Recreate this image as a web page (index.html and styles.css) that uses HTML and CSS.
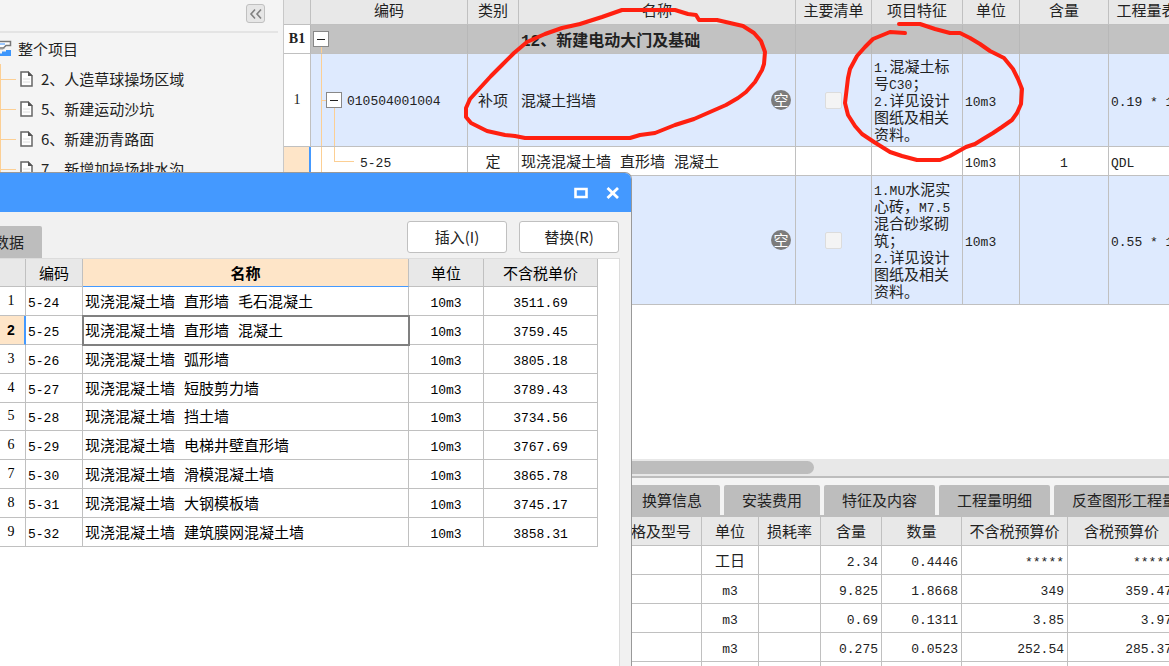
FILE: index.html
```html
<!DOCTYPE html>
<html lang="zh-CN">
<head>
<meta charset="utf-8">
<title>工程计价</title>
<link rel="stylesheet" href="styles.css">
</head>
<body>
<div class="app">
  <aside class="sidebar">
    <div class="sidebar-head">
      <button class="collapse" type="button" aria-label="收起">
        <svg width="14" height="12" viewBox="0 0 14 12" fill="none" stroke="#808080" stroke-width="1.6"><path d="M6 1.5 2 6l4 4.500M12 1.500 8 6l4 4.500"/></svg>
      </button>
    </div>
    <div class="tree-root">
      <svg width="12" height="18" viewBox="0 0 12 18"><path d="M0 1.500h10.500v4H6L3.500 8H0" fill="#fff" stroke="#777" stroke-width="1.500"/><path d="M0 3h5v2H0z" fill="#9cc8ff"/><path d="M0 9h3l2-1.500" fill="none" stroke="#999"/><path d="M2 11.500h4V10h5v6H0v-2.500h2z" fill="#3d96fb"/></svg>
      <span>整个项目</span>
    </div>
    <ul class="tree">
      <li><svg class="doc" width="13" height="16" viewBox="0 0 13 16"><path d="M1 1h7l4 4v10H1z" fill="#fff" stroke="#666" stroke-width="1.500"/><path d="M8 0v5h5z" fill="#555"/><path d="M3 8h7M3 11h7" stroke="#ddd"/></svg>2、人造草球操场区域</li>
      <li><svg class="doc" width="13" height="16" viewBox="0 0 13 16"><path d="M1 1h7l4 4v10H1z" fill="#fff" stroke="#666" stroke-width="1.500"/><path d="M8 0v5h5z" fill="#555"/><path d="M3 8h7M3 11h7" stroke="#ddd"/></svg>5、新建运动沙坑</li>
      <li><svg class="doc" width="13" height="16" viewBox="0 0 13 16"><path d="M1 1h7l4 4v10H1z" fill="#fff" stroke="#666" stroke-width="1.500"/><path d="M8 0v5h5z" fill="#555"/><path d="M3 8h7M3 11h7" stroke="#ddd"/></svg>6、新建沥青路面</li>
      <li><svg class="doc" width="13" height="16" viewBox="0 0 13 16"><path d="M1 1h7l4 4v10H1z" fill="#fff" stroke="#666" stroke-width="1.500"/><path d="M8 0v5h5z" fill="#555"/><path d="M3 8h7M3 11h7" stroke="#ddd"/></svg>7、新增加操场排水沟</li>
    </ul>
  </aside>

  <main class="work">
    <section class="bill">
      <table class="grid bill-grid">
        <colgroup><col class="w-no"><col class="w-code"><col class="w-type"><col class="w-name"><col class="w-main"><col class="w-feat"><col class="w-unit"><col class="w-qty"><col class="w-expr"></colgroup>
        <thead>
          <tr><th></th><th>编码</th><th>类别</th><th>名称</th><th>主要清单</th><th>项目特征</th><th>单位</th><th>含量</th><th>工程量表达式</th></tr>
        </thead>
        <tbody>
          <tr class="group">
            <td class="rowno">B1</td>
            <td class="code guide-top"><button class="toggle" type="button" aria-label="折叠"></button></td>
            <td></td><td class="left title">12、新建电动大门及基础</td><td></td><td></td><td></td><td></td><td></td>
          </tr>
          <tr class="item short">
            <td class="rowno">1</td>
            <td class="code guide-item"><div class="code-line"><button class="toggle" type="button" aria-label="折叠"></button><span class="n">010504001004</span></div></td>
            <td>补项</td>
            <td class="left flush"><div class="name-line"><span class="label">混凝土挡墙</span><span class="badge">空</span></div></td>
            <td class="flush"><input class="tick" type="checkbox" aria-label="主要清单"></td>
            <td class="left feature"><span class="n">1.</span>混凝土标<br>号<span class="n">C30</span>；<br><span class="n">2.</span>详见设计<br>图纸及相关<br>资料。</td>
            <td class="left n">10m3</td><td></td><td class="left n">0.19 * 1</td>
          </tr>
          <tr class="sub">
            <td class="rowno current"></td>
            <td class="code guide-sub n">5-25</td>
            <td>定</td>
            <td class="left">现浇混凝土墙 直形墙 混凝土</td>
            <td></td><td></td>
            <td class="left n">10m3</td><td class="n">1</td><td class="left n">QDL</td>
          </tr>
          <tr class="item tall">
            <td class="rowno">2</td>
            <td class="code"></td><td></td>
            <td class="left flush"><div class="name-line"><span class="label"></span><span class="badge">空</span></div></td>
            <td class="flush"><input class="tick" type="checkbox" aria-label="主要清单"></td>
            <td class="left feature"><span class="n">1.MU</span>水泥实<br>心砖，<span class="n">M7.5</span><br>混合砂浆砌<br>筑；<br><span class="n">2.</span>详见设计<br>图纸及相关<br>资料。</td>
            <td class="left n">10m3</td><td></td><td class="left n">0.55 * 1</td>
          </tr>
        </tbody>
      </table>
      <div class="hscroll"><div class="thumb"></div></div>
    </section>

    <section class="detail">
      <nav class="tabs">
        <button type="button">换算信息</button><button type="button">安装费用</button><button type="button">特征及内容</button><button type="button">工程量明细</button><button type="button">反查图形工程量</button>
      </nav>
      <table class="grid detail-grid">
        <colgroup><col class="d-name"><col class="d-spec"><col class="d-unit"><col class="d-loss"><col class="d-content"><col class="d-count"><col class="d-net"><col class="d-gross"></colgroup>
        <thead>
          <tr><th></th><th>规格及型号</th><th>单位</th><th>损耗率</th><th>含量</th><th>数量</th><th>不含税预算价</th><th>含税预算价</th></tr>
        </thead>
        <tbody>
          <tr><td></td><td></td><td>工日</td><td></td><td class="num">2.34</td><td class="num">0.4446</td><td class="num">*****</td><td class="num">*****</td></tr>
          <tr><td></td><td></td><td class="n">m3</td><td></td><td class="num">9.825</td><td class="num">1.8668</td><td class="num">349</td><td class="num">359.47</td></tr>
          <tr><td></td><td></td><td class="n">m3</td><td></td><td class="num">0.69</td><td class="num">0.1311</td><td class="num">3.85</td><td class="num">3.97</td></tr>
          <tr><td></td><td></td><td class="n">m3</td><td></td><td class="num">0.275</td><td class="num">0.0523</td><td class="num">252.54</td><td class="num">285.37</td></tr>
          <tr><td></td><td></td><td></td><td></td><td></td><td></td><td></td><td></td></tr>
        </tbody>
      </table>
    </section>
  </main>
</div>

<section class="dialog" role="dialog" aria-label="查询">
  <header class="titlebar">
    <button type="button" aria-label="最大化"><svg width="14" height="12" viewBox="0 0 14 12"><path d="M1.500 2h11v8h-11z" fill="none" stroke="#fff" stroke-width="2.600"/></svg></button>
    <button type="button" aria-label="关闭"><svg width="14" height="12" viewBox="0 0 14 12"><path d="M1.500 1 12 11M12 1 1.500 11" fill="none" stroke="#fff" stroke-width="2.800"/></svg></button>
  </header>
  <div class="toolbar">
    <button class="dialog-tab" type="button">数据</button>
    <div class="actions">
      <button type="button">插入(I)</button>
      <button type="button">替换(R)</button>
    </div>
  </div>
  <div class="pane">
    <table class="grid quota">
      <colgroup><col class="q-no"><col class="q-code"><col class="q-name"><col class="q-unit"><col class="q-price"></colgroup>
      <thead>
        <tr><th></th><th>编码</th><th class="sorted">名称</th><th>单位</th><th>不含税单价</th></tr>
      </thead>
      <tbody>
        <tr><td class="rowno">1</td><td class="left n">5-24</td><td class="left">现浇混凝土墙 直形墙 毛石混凝土</td><td class="n">10m3</td><td class="n">3511.69</td></tr>
        <tr class="selected"><td class="rowno current">2</td><td class="left n">5-25</td><td class="left focus">现浇混凝土墙 直形墙 混凝土</td><td class="n">10m3</td><td class="n">3759.45</td></tr>
        <tr><td class="rowno">3</td><td class="left n">5-26</td><td class="left">现浇混凝土墙 弧形墙</td><td class="n">10m3</td><td class="n">3805.18</td></tr>
        <tr><td class="rowno">4</td><td class="left n">5-27</td><td class="left">现浇混凝土墙 短肢剪力墙</td><td class="n">10m3</td><td class="n">3789.43</td></tr>
        <tr><td class="rowno">5</td><td class="left n">5-28</td><td class="left">现浇混凝土墙 挡土墙</td><td class="n">10m3</td><td class="n">3734.56</td></tr>
        <tr><td class="rowno">6</td><td class="left n">5-29</td><td class="left">现浇混凝土墙 电梯井壁直形墙</td><td class="n">10m3</td><td class="n">3767.69</td></tr>
        <tr><td class="rowno">7</td><td class="left n">5-30</td><td class="left">现浇混凝土墙 滑模混凝土墙</td><td class="n">10m3</td><td class="n">3865.78</td></tr>
        <tr><td class="rowno">8</td><td class="left n">5-31</td><td class="left">现浇混凝土墙 大钢模板墙</td><td class="n">10m3</td><td class="n">3745.17</td></tr>
        <tr><td class="rowno">9</td><td class="left n">5-32</td><td class="left">现浇混凝土墙 建筑膜网混凝土墙</td><td class="n">10m3</td><td class="n">3858.31</td></tr>
      </tbody>
    </table>
  </div>
</section>

<svg class="markup" width="1169" height="170" viewBox="0 0 1169 170" fill="none" stroke="#ff2010" stroke-width="4" stroke-linejoin="round" stroke-linecap="round">
  <path d="M580 24 562 28 545 34 527 42 514 53 502 65 491 76 480 88 470 99 466 108 466 117 471 123 477 126 487 131 505 135 515 136 525 138H630L640 135 655 133 675 125 694 119 710 112 726 105 738 98 746 92 755 82 762 70 764 64 765 52 761 41 754 33 743 26 730 23 717 20H699L696 15 688 14 675 10H622L602 17 580 24"/>
  <path d="M899 24H920L935 29 950 33H960L970 38 980 44 990 51 1004 58 1013 69 1018 79 1022 89 1021 104 1017 113 1012 120 1002 127 993 133 983 139 975 144 966 147 950 156 940 160H917L902 156 890 152 874 142 862 134 855 126 848 115 845 103 848 78 850 69 857 56 865 47 873 39 890 32 905 33"/>
</svg>
</body>
</html>
```
FILE: styles.css
```css
* { box-sizing: border-box; }

body {
  margin: 0;
  height: 100vh;
  overflow: hidden;
  position: relative;
  background: #fff;
  color: #222;
  font: 15px/20px "Noto Sans CJK SC", "Noto Sans", sans-serif;
}

button { font: inherit; color: inherit; padding: 0; border: 0; background: none; }

.app { display: flex; height: 100%; }

/* project tree */
.sidebar {
  flex: 0 0 284px;
  background: #f4f4f4;
  border-right: 1px solid #c8c8c8;
}
.sidebar-head {
  height: 33px;
  margin-right: 5px;
  padding: 4px 13px 0 0;
  border-bottom: 2px solid #e4e4e4;
  display: flex;
  justify-content: flex-end;
}
.collapse {
  width: 19px;
  height: 19px;
  border: 1px solid #c0c0c0;
  border-radius: 3px;
  background: #e6e6e6;
  display: grid;
  place-items: center;
}
.tree-root { display: flex; align-items: center; gap: 6px; height: 31px; }
.tree { margin: 0; padding: 0; list-style: none; border-left: 1px solid #fccf94; }
.tree li {
  display: flex;
  align-items: center;
  gap: 8px;
  height: 30px;
  padding-left: 19px;
  background: linear-gradient(#fccf94, #fccf94) no-repeat 0 50% / 15px 1px;
}

/* shared grid look */
.grid {
  table-layout: fixed;
  border-collapse: separate;
  border-spacing: 0;
  font-family: "Liberation Mono", "Noto Sans CJK SC", monospace;
}
.grid th, .grid td {
  padding: 6px 0 0;
  height: 29px;
  border-right: 1px solid #c0c0c0;
  border-bottom: 1px solid #c0c0c0;
  text-align: center;
  white-space: nowrap;
  overflow: hidden;
}
.grid th { background: #e8e8e8; font-weight: normal; }
.grid .left { text-align: left; padding-left: 2px; }
.grid .flush { padding-top: 0; }
.grid .n, .grid .num { font-size: 13px; }
.grid .num { text-align: right; padding-right: 3px; }
.grid .rowno { padding-top: 0; font-family: "Liberation Serif", serif; font-size: 14px; background: #fff; }
.grid .current { background: #fee5c8; border-right: 2px solid #4499ff; }

.work { flex: 1; min-width: 0; display: flex; flex-direction: column; }

/* bill of quantities */
.bill { flex: 1; min-height: 0; overflow: hidden; display: flex; flex-direction: column; }
.bill-grid { width: 931px; }
.w-no { width: 27px; }
.w-code { width: 157px; }
.w-type { width: 51px; }
.w-name { width: 277px; }
.w-main { width: 76px; }
.w-feat { width: 91px; }
.w-unit { width: 57px; }
.w-qty { width: 89px; }
.w-expr { width: 106px; }
.bill-grid th { height: 25px; padding-top: 2px; }
.bill-grid .group td { background-color: #c2c2c2; border-right-color: #b8b8b8; font-weight: bold; }
.bill-grid .group .title { font-size: 16px; }
.bill-grid .group .rowno { background-color: #fff; }
.bill-grid .item td { background-color: #deeafe; }
.bill-grid .item .rowno { background-color: #fff; }
.bill-grid .short td { height: 93px; }
.bill-grid .tall td { height: 129px; }
.grid .feature { padding-top: 4px; line-height: 17px; }

.grid .code { padding-top: 0; text-align: left; background-repeat: no-repeat; }
.code-line { display: flex; align-items: center; gap: 5px; padding-left: 15px; }
.code-line .n { padding-top: 3px; }
.guide-top { background-image: linear-gradient(#fccf94, #fccf94); background-size: 1px 8px; background-position: 10px 100%; }
.guide-top .toggle { margin-left: 2px; }
.guide-item {
  background-image: linear-gradient(#fccf94, #fccf94), linear-gradient(#fccf94, #fccf94), linear-gradient(#fccf94, #fccf94);
  background-size: 1px 100%, 6px 1px, 1px 50%;
  background-position: 10px 0, 10px 50%, 23px 100%;
}
.grid .guide-sub {
  padding: 6px 0 0 49px;
  background-image: linear-gradient(#fccf94, #fccf94), linear-gradient(#fccf94, #fccf94), linear-gradient(#fccf94, #fccf94);
  background-size: 1px 100%, 1px 50%, 20px 1px;
  background-position: 10px 0, 23px 0, 23px 50%;
}
.toggle {
  display: block;
  width: 16px;
  height: 16px;
  border: 1px solid #888;
  background: linear-gradient(#222, #222) no-repeat center / 8px 1px #fff;
}
.name-line { display: flex; justify-content: space-between; align-items: center; padding-right: 4px; }
.name-line .label { padding-top: 6px; }
.badge {
  width: 20px;
  height: 20px;
  border-radius: 50%;
  background: #7c7c7c;
  color: #fff;
  font-family: "Noto Sans CJK SC", sans-serif;
  line-height: 19px;
  text-align: center;
}
.tick {
  appearance: none;
  display: block;
  width: 17px;
  height: 17px;
  margin: 0 auto;
  border: 1px solid #dcdcdc;
  border-radius: 2px;
  background: #f4f4f4;
}

.hscroll { margin-top: auto; height: 17px; padding: 2px 0; background: #e8e8e8; }
.thumb { width: 530px; height: 13px; border-radius: 7px; background: #bdbdbd; }

/* resource detail panel */
.detail {
  flex: 0 0 190px;
  overflow: hidden;
  border-top: 2px solid #bdbdbd;
  background: #fff;
}
.tabs {
  display: flex;
  gap: 4px;
  padding: 7px 0 0 340px;
  background: #f4f4f4;
  border-bottom: 2px solid #bdbdbd;
}
.tabs button {
  flex: none;
  height: 30px;
  padding: 0 18px;
  border-radius: 2px 2px 0 0;
  background: #bdbdbd;
}
.detail-grid { width: 892px; }
.d-name { width: 322px; }
.d-spec { width: 96px; }
.d-unit { width: 57px; }
.d-loss { width: 62px; }
.d-content { width: 61px; }
.d-count { width: 80px; }
.d-net { width: 106px; }
.d-gross { width: 108px; }

/* quota lookup dialog */
.dialog {
  position: absolute;
  left: 0;
  top: 172px;
  bottom: 0;
  width: 632px;
  max-width: 100%;
  display: flex;
  flex-direction: column;
  overflow: hidden;
  background: #f1f1f1;
  border: 1px solid #999;
  border-width: 1px 1px 0 0;
  border-radius: 0 7px 0 0;
}
.titlebar {
  flex: none;
  height: 39px;
  padding-right: 11px;
  display: flex;
  justify-content: flex-end;
  align-items: center;
  gap: 18px;
  background: #4499ff;
}
.titlebar button, .titlebar svg { display: block; }
.toolbar {
  flex: none;
  height: 46px;
  padding-right: 12px;
  display: flex;
  justify-content: space-between;
  align-items: flex-end;
}
.dialog-tab {
  width: 42px;
  height: 32px;
  padding-right: 18px;
  display: flex;
  justify-content: flex-end;
  align-items: center;
  border-radius: 0 2px 0 0;
  background: #bdbdbd;
  white-space: nowrap;
  overflow: hidden;
}
.actions { display: flex; gap: 12px; padding-bottom: 5px; }
.actions button {
  width: 100px;
  height: 32px;
  border: 1px solid #c0c0c0;
  border-radius: 3px;
  background: #fff;
}
.pane {
  flex: 1;
  margin-right: 11px;
  border: 1px solid #dcdcdc;
  border-width: 1px 1px 0 0;
  background: #fff;
}
.quota { width: 598px; height: 288px; color: #000; }
.quota th, .quota td { height: 28px; }
.q-no { width: 26px; }
.q-code { width: 57px; }
.q-name { width: 326px; }
.q-unit { width: 75px; }
.q-price { width: 114px; }
.quota th.sorted { background: #fee5c8; border-bottom-color: #4499ff; font-weight: bold; }
.quota .rowno { padding-right: 3px; }
.quota .current { padding-right: 2px; font-family: "Liberation Sans", sans-serif; font-weight: bold; }
.quota .focus { outline: 2px solid #808080; outline-offset: -1px; }

/* hand-drawn review marks */
.markup { position: absolute; left: 0; top: 0; pointer-events: none; }
```
